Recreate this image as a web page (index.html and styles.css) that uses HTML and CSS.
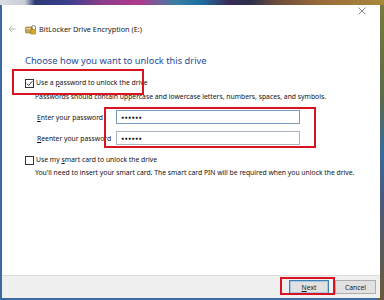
FILE: index.html
```html
<!DOCTYPE html>
<html lang="en">
<head>
    <meta charset="UTF-8">
    <meta name="viewport" content="width=device-width, initial-scale=1.0">
    <title>BitLocker Drive Encryption (E:)</title>
    <link rel="stylesheet" href="styles.css">
</head>
<body>
<div class="window">
    <div class="titlebar">
        <svg class="close" width="8" height="8" viewBox="0 0 8 8"><path d="M0.5 0.5L7.5 7.5M7.5 0.5L0.5 7.5" stroke="#8a8a8a" stroke-width="1"/></svg>
    </div>

    <div class="header">
        <svg class="back" width="8" height="8" viewBox="0 0 8 8"><path d="M7.5 4H1M4 1L1 4L4 7" fill="none" stroke="#b5b5b5" stroke-width="1"/></svg>
        <svg class="app-icon" width="11" height="11" viewBox="0 0 11 11">
            <rect x="0.5" y="3" width="7" height="6" rx="1" fill="#c9a55a" stroke="#8a6d2c" stroke-width="0.6"/>
            <rect x="1.5" y="4" width="5" height="1.2" fill="#e8d39a"/>
            <path d="M6.5 5.5v-2a2 2 0 0 1 4 0v2" fill="none" stroke="#7a7a7a" stroke-width="1"/>
            <rect x="5.5" y="5.5" width="5.2" height="4.6" rx="0.6" fill="#d4a928" stroke="#8a6a14" stroke-width="0.5"/>
        </svg>
        <span class="title">BitLocker Drive Encryption (E:)</span>
    </div>

    <div class="main">
        <h1>Choose how you want to unlock this drive</h1>

        <div class="option">
            <span class="checkbox checked">
                <svg width="7" height="7" viewBox="0 0 7 7"><path d="M0.8 3.6L2.7 5.5L6.3 1.2" fill="none" stroke="#333" stroke-width="1"/></svg>
            </span>
            <span>Use a <u>p</u>assword to unlock the drive</span>
        </div>
        <p class="hint">Passwords should contain uppercase and lowercase letters, numbers, spaces, and symbols.</p>

        <div class="fields">
            <div class="field">
                <label><u>E</u>nter your password</label>
                <div class="input focused">●●●●●●</div>
            </div>
            <div class="field">
                <label><u>R</u>eenter your password</label>
                <div class="input">●●●●●●</div>
            </div>
        </div>

        <div class="option second">
            <span class="checkbox"></span>
            <span>Use my <u>s</u>mart card to unlock the drive</span>
        </div>
        <p class="hint tight">You'll need to insert your smart card. The smart card PIN will be required when you unlock the drive.</p>
    </div>

    <div class="footer">
        <button class="default"><u>N</u>ext</button>
        <button>Cancel</button>
    </div>

    <div class="mark mark-check"></div>
    <div class="mark mark-fields"></div>
    <div class="mark mark-next"></div>
</div>
</body>
</html>
```

FILE: styles.css
```css
html, body {
    margin: 0;
    height: 300px;
    overflow: hidden;
}

body {
    font-family: "Noto Sans", "Open Sans", sans-serif;
    color: #111;
    background:
        linear-gradient(to right, #d8dce4 0px, #c9ccd6 25px, #2b3a74 35px, #3c3f8e 70px, #8a3c8a 100px, #b03a8e 140px, #3a7fa6 175px, #1d6fa0 200px, #3a2a55 230px, #2a3050 250px, #6a4a3a 275px, #9a6a3a 320px, #a88a3a 384px) top / 100% 5px no-repeat,
        linear-gradient(to bottom, #7a7a3a 0px, #5a6a4a 100px, #3a6a9a 150px, #4a5a7a 200px, #6a5a3a 300px) right / 6px 100% no-repeat,
        #3a6aa0;
}

.window {
    position: relative;
    margin: 5px 0 0 2px;
    width: 378px;
    height: 293px;
    background: #fff;
    display: flex;
    flex-direction: column;
    font-size: 6.8px;
}

.titlebar {
    height: 14px;
    display: flex;
    justify-content: flex-end;
    align-items: center;
    padding-right: 14px;
}

.close {
    margin-bottom: 2px;
}

.header {
    height: 20px;
    display: flex;
    align-items: center;
    padding-left: 6px;
}

.back {
    margin-right: 9px;
}

.app-icon {
    margin-right: 3px;
}

.title {
    font-size: 7.3px;
    color: #1a1a1a;
}

.main {
    padding-left: 23px;
}

h1 {
    margin: 14px 0 0;
    font-size: 9.3px;
    line-height: 16px;
    font-weight: normal;
    color: #1e4c9a;
}

.option {
    display: flex;
    align-items: center;
    height: 12px;
    line-height: 12px;
    margin-top: 8px;
}

.option.second {
    margin-top: 8px;
}

.checkbox {
    width: 9px;
    height: 9px;
    box-sizing: border-box;
    border: 1px solid #333;
    background: #fff;
    margin-right: 2px;
    display: flex;
    align-items: center;
    justify-content: center;
}

.hint {
    margin: 2px 0 0 10px;
    line-height: 12px;
    white-space: nowrap;
}

.hint.tight {
    margin-top: 1px;
}

.fields {
    margin-top: 6px;
    padding-left: 12px;
    display: flex;
    flex-direction: column;
    gap: 5px;
}

.field {
    height: 16px;
    display: flex;
    align-items: center;
}

.field label {
    width: 79px;
    white-space: nowrap;
}

.input {
    width: 184px;
    height: 14px;
    box-sizing: border-box;
    border: 1px solid #a9b4c0;
    font-size: 5px;
    line-height: 12px;
    padding-left: 4px;
    letter-spacing: 0.5px;
    color: #111;
}

.input.focused {
    border-color: #7a9cc0;
}

.footer {
    margin-top: auto;
    height: 23px;
    border-top: 1px solid #dcdcdc;
    background: #f0f0f0;
    display: flex;
    justify-content: flex-end;
    align-items: flex-start;
    gap: 6px;
    padding: 4px 4px 0 0;
    box-sizing: border-box;
}

button {
    font-family: inherit;
    font-size: 6.8px;
    height: 14px;
    width: 41px;
    padding: 0;
    border: 1px solid #adadad;
    background: #e1e1e1;
    color: #1a1a1a;
}

button.default {
    width: 40px;
    border-color: #3c7fb1;
    box-shadow: inset 0 0 0 1px #a6c8e6;
}

.mark {
    position: absolute;
    border: 2px solid #d7141f;
    box-sizing: border-box;
}

.mark-check {
    left: 10px;
    top: 64px;
    width: 132px;
    height: 26px;
}

.mark-fields {
    left: 102px;
    top: 102px;
    width: 212px;
    height: 41px;
}

.mark-next {
    left: 278px;
    top: 272px;
    width: 55px;
    height: 18px;
}
```
